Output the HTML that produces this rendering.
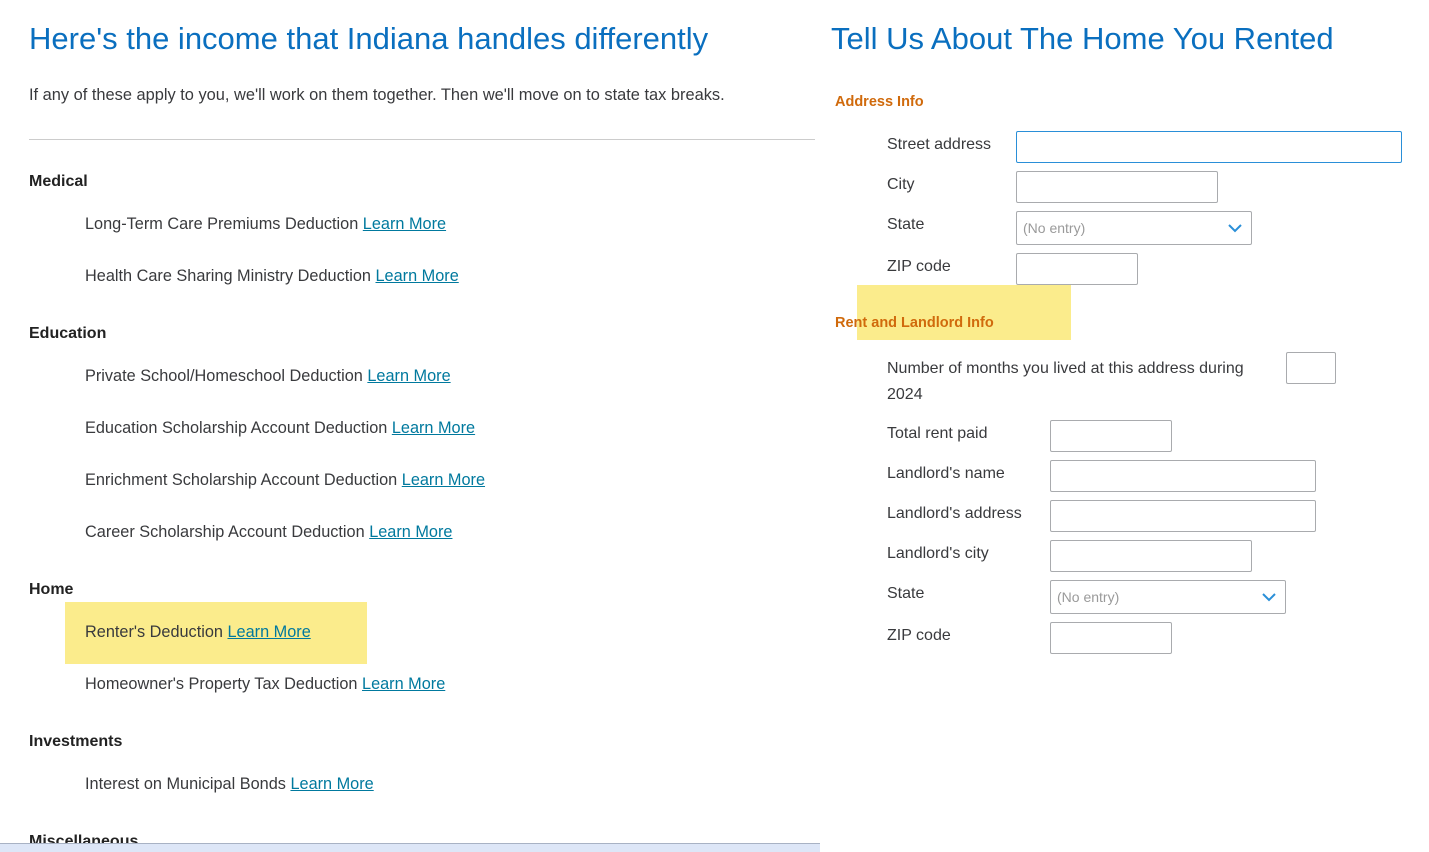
<!DOCTYPE html>
<html><head><meta charset="utf-8"><style>
*{margin:0;padding:0;box-sizing:border-box}
body{width:1429px;height:852px;overflow:hidden;background:#fff;font-family:"Liberation Sans",sans-serif;color:#393a3d;position:relative}
.a{position:absolute;white-space:nowrap}
.t{font-size:31px;color:#0a6fbf;font-weight:normal}
.s{font-size:16.4px}
.h{font-size:16px;font-weight:bold;color:#222}
.i{font-size:16.3px}
.i a{color:#00799e;text-decoration:underline}
.hl{position:absolute;background:#fbec8c}
.o{font-size:14.5px;font-weight:bold;color:#d06a0c}
.l{font-size:16px}
.in{position:absolute;border:1px solid #a9abae;border-radius:2px;background:#fff}
.sel{font-size:14px;color:#9a9a9a;padding:8px 6px}
.chev{position:absolute;right:9px;top:12px}
</style></head><body>
<div class="a t" style="left:29px;top:21px">Here's the income that Indiana handles differently</div>
<div class="a s" style="left:29px;top:86px">If any of these apply to you, we'll work on them together. Then we'll move on to state tax breaks.</div>
<div style="position:absolute;left:29px;top:139px;width:786px;height:1px;background:#ccc"></div>
<div class="hl" style="left:65px;top:602px;width:302px;height:62px"></div>
<div class="a h" style="left:29px;top:173px">Medical</div>
<div class="a i" style="left:85px;top:215px">Long-Term Care Premiums Deduction <a>Learn More</a></div>
<div class="a i" style="left:85px;top:267px">Health Care Sharing Ministry Deduction <a>Learn More</a></div>
<div class="a h" style="left:29px;top:325px">Education</div>
<div class="a i" style="left:85px;top:367px">Private School/Homeschool Deduction <a>Learn More</a></div>
<div class="a i" style="left:85px;top:419px">Education Scholarship Account Deduction <a>Learn More</a></div>
<div class="a i" style="left:85px;top:471px">Enrichment Scholarship Account Deduction <a>Learn More</a></div>
<div class="a i" style="left:85px;top:523px">Career Scholarship Account Deduction <a>Learn More</a></div>
<div class="a h" style="left:29px;top:581px">Home</div>
<div class="a i" style="left:85px;top:623px">Renter's Deduction <a>Learn More</a></div>
<div class="a i" style="left:85px;top:675px">Homeowner's Property Tax Deduction <a>Learn More</a></div>
<div class="a h" style="left:29px;top:733px">Investments</div>
<div class="a i" style="left:85px;top:775px">Interest on Municipal Bonds <a>Learn More</a></div>
<div class="a h" style="left:29px;top:833px">Miscellaneous</div>
<div style="position:absolute;left:0;top:843px;width:820px;height:9px;background:#dde6f7;border-top:1px solid #a8b2c4"></div>

<div class="a t" style="left:831px;top:21px">Tell Us About The Home You Rented</div>
<div class="a o" style="left:835px;top:94px">Address Info</div>
<div class="a l" style="left:887px;top:136px">Street address</div>
<div class="in" style="left:1016px;top:131px;width:386px;height:32px;border-color:#2a8fd8"></div>
<div class="a l" style="left:887px;top:176px">City</div>
<div class="in" style="left:1016px;top:171px;width:202px;height:32px"></div>
<div class="a l" style="left:887px;top:216px">State</div>
<div class="in sel" style="left:1016px;top:211px;width:236px;height:34px">(No entry)<svg class="chev" width="14" height="9" viewBox="0 0 14 9"><path d="M1 1l6 6 6-6" fill="none" stroke="#2a8fd8" stroke-width="2"/></svg></div>
<div class="a l" style="left:887px;top:258px">ZIP code</div>
<div class="in" style="left:1016px;top:253px;width:122px;height:32px"></div>
<div class="hl" style="left:857px;top:285px;width:214px;height:55px"></div>
<div class="a o" style="left:835px;top:315px">Rent and Landlord Info</div>
<div class="a l" style="left:887px;top:356px;line-height:26px;white-space:normal;width:390px">Number of months you lived at this address during<br>2024</div>
<div class="in" style="left:1286px;top:352px;width:50px;height:32px"></div>
<div class="a l" style="left:887px;top:425px">Total rent paid</div>
<div class="in" style="left:1050px;top:420px;width:122px;height:32px"></div>
<div class="a l" style="left:887px;top:465px">Landlord's name</div>
<div class="in" style="left:1050px;top:460px;width:266px;height:32px"></div>
<div class="a l" style="left:887px;top:505px">Landlord's address</div>
<div class="in" style="left:1050px;top:500px;width:266px;height:32px"></div>
<div class="a l" style="left:887px;top:545px">Landlord's city</div>
<div class="in" style="left:1050px;top:540px;width:202px;height:32px"></div>
<div class="a l" style="left:887px;top:585px">State</div>
<div class="in sel" style="left:1050px;top:580px;width:236px;height:34px">(No entry)<svg class="chev" width="14" height="9" viewBox="0 0 14 9"><path d="M1 1l6 6 6-6" fill="none" stroke="#2a8fd8" stroke-width="2"/></svg></div>
<div class="a l" style="left:887px;top:627px">ZIP code</div>
<div class="in" style="left:1050px;top:622px;width:122px;height:32px"></div>
</body></html>
